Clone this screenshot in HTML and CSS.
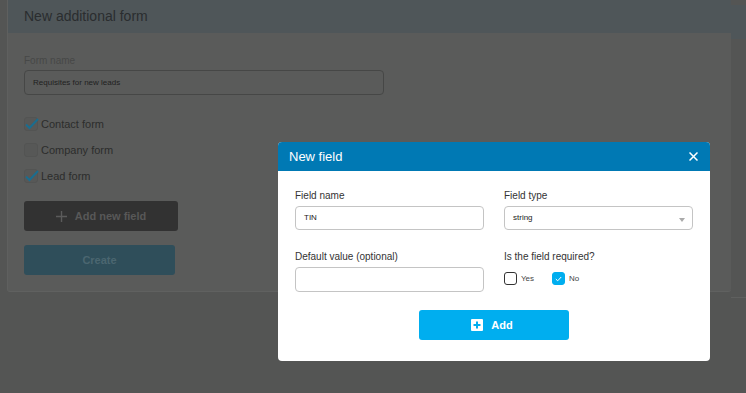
FILE: index.html
```
<!DOCTYPE html>
<html lang="en">
<head>
    <meta charset="UTF-8">
    <meta name="viewport" content="width=device-width, initial-scale=1.0">
    <title>New additional form</title>
    <link rel="stylesheet" href="styles.css">
</head>
<body>
    <div class="page">
        <div class="card">
            <div class="card-head">New additional form</div>
            <div class="card-body">
                <div class="label">Form name</div>
                <div class="input dim">Requisites for new leads</div>
                <div class="checks">
                    <div class="check"><span class="box"><svg width="16" height="14" viewBox="0 0 16 14"><path d="M2 7.5 L5.5 11 L14 2" fill="none" stroke="#1a6d8f" stroke-width="2"/></svg></span>Contact form</div>
                    <div class="check"><span class="box"></span>Company form</div>
                    <div class="check"><span class="box"><svg width="16" height="14" viewBox="0 0 16 14"><path d="M2 7.5 L5.5 11 L14 2" fill="none" stroke="#1a6d8f" stroke-width="2"/></svg></span>Lead form</div>
                </div>
                <button class="btn-dark"><svg width="11" height="11" viewBox="0 0 11 11"><path d="M5.5 0 V11 M0 5.5 H11" stroke="#5b5b5b" stroke-width="1.4"/></svg>Add new field</button>
                <button class="btn-create">Create</button>
            </div>
        </div>
        <div class="side-card"><div class="side-head"></div></div>
    </div>

    <div class="modal">
        <div class="modal-head">
            <span>New field</span>
            <svg class="close" width="9" height="9" viewBox="0 0 9 9"><path d="M0.5 0.5 L8.5 8.5 M8.5 0.5 L0.5 8.5" stroke="#fff" stroke-width="1.5"/></svg>
        </div>
        <div class="modal-body">
            <div class="grid">
                <div class="field">
                    <div class="m-label">Field name</div>
                    <div class="m-input">TIN</div>
                </div>
                <div class="field">
                    <div class="m-label">Field type</div>
                    <div class="m-input select">string<span class="arrow"></span></div>
                </div>
                <div class="field">
                    <div class="m-label">Default value (optional)</div>
                    <div class="m-input tall"></div>
                </div>
                <div class="field">
                    <div class="m-label">Is the field required?</div>
                    <div class="radios">
                        <div class="opt"><span class="m-box"></span>Yes</div>
                        <div class="opt"><span class="m-box on"><svg width="7" height="6" viewBox="0 0 7 6"><path d="M0.8 3 L2.7 4.8 L6.2 1" fill="none" stroke="#fff" stroke-width="1"/></svg></span>No</div>
                    </div>
                </div>
            </div>
            <div class="actions">
                <button class="btn-add"><span class="add-icon"><svg width="8" height="8" viewBox="0 0 8 8"><path d="M4 0.5 V7.5 M0.5 4 H7.5" stroke="#00aeef" stroke-width="2"/></svg></span>Add</button>
            </div>
        </div>
    </div>
</body>
</html>
```

FILE: styles.css
```
body {
    margin: 0;
    background: #545554;
    font-family: 'Liberation Sans', Arial, sans-serif;
    height: 393px;
    overflow: hidden;
}
.page {
    display: flex;
    align-items: flex-start;
    padding-left: 7px;
}
.card {
    width: 724px;
    background: #5a5b5a;
    border-left: 1px solid #5f605f;
    border-bottom: 1px solid #606160;
    border-radius: 0 0 3px 3px;
    box-sizing: border-box;
}
.card-head {
    height: 33px;
    background: #4f5659;
    color: #2a2d2f;
    font-size: 14px;
    line-height: 33px;
    padding-left: 16px;
}
.card-body {
    padding: 22px 17px 16px 16px;
}
.label {
    font-size: 10px;
    line-height: 12px;
    color: #474847;
    margin-bottom: 3px;
}
.input {
    width: 360px;
    height: 25px;
    box-sizing: border-box;
    border: 1px solid #464746;
    border-radius: 4px;
    font-size: 8px;
    line-height: 23px;
    padding-left: 8px;
    color: #1f1f1f;
}
.checks {
    display: flex;
    flex-direction: column;
    gap: 12px;
    margin-top: 22px;
}
.check {
    display: flex;
    align-items: center;
    gap: 3px;
    height: 14px;
    font-size: 11px;
    color: #2c2d2c;
}
.box {
    position: relative;
    width: 14px;
    height: 14px;
    box-sizing: border-box;
    border: 1px solid #535453;
    border-radius: 3px;
    background: #575857;
}
.box svg {
    position: absolute;
    left: -1px;
    top: -1px;
}
button {
    font-family: inherit;
    border: none;
    border-radius: 3px;
    font-weight: bold;
    font-size: 11px;
    cursor: pointer;
    padding: 0;
}
.btn-dark {
    display: flex;
    align-items: center;
    justify-content: center;
    gap: 8px;
    width: 154px;
    height: 30px;
    margin-top: 18px;
    background: #323232;
    color: #585858;
}
.btn-create {
    display: block;
    width: 151px;
    height: 30px;
    margin-top: 14px;
    background: #2f4e5a;
    color: #4b6670;
}
.side-card {
    flex: 1;
    margin-top: 5px;
    height: 293px;
    border-bottom: 1px solid #5f605f;
    box-sizing: border-box;
}
.side-head {
    height: 34px;
    background: #4f5659;
}
.modal {
    position: absolute;
    left: 278px;
    top: 142px;
    width: 432px;
    background: #fff;
    border-radius: 4px;
    overflow: hidden;
}
.modal-head {
    display: flex;
    align-items: center;
    justify-content: space-between;
    height: 29px;
    padding: 0 12px 0 11px;
    background: #0079b4;
    color: #fff;
    font-size: 13px;
}
.modal-body {
    padding: 19px 17px 21px;
}
.grid {
    display: grid;
    grid-template-columns: 189px 189px;
    column-gap: 20px;
    row-gap: 21px;
}
.m-label {
    font-size: 10px;
    line-height: 12px;
    color: #333;
    margin-bottom: 4px;
}
.m-input {
    position: relative;
    height: 24px;
    box-sizing: border-box;
    border: 1px solid #c4c4c4;
    border-radius: 4px;
    font-size: 8px;
    line-height: 22px;
    padding-left: 8px;
    color: #222;
}
.m-input.tall {
    height: 25px;
}
.arrow {
    position: absolute;
    right: 7px;
    top: 11px;
    border-left: 3px solid transparent;
    border-right: 3px solid transparent;
    border-top: 4px solid #aaa;
}
.radios {
    display: flex;
    gap: 18px;
    margin-top: 9px;
}
.opt {
    display: flex;
    align-items: center;
    gap: 4px;
    font-size: 8px;
    color: #444;
}
.m-box {
    display: flex;
    align-items: center;
    justify-content: center;
    width: 13px;
    height: 13px;
    box-sizing: border-box;
    border: 1px solid #333;
    border-radius: 3px;
}
.m-box.on {
    background: #00aeef;
    border-color: #00aeef;
}
.actions {
    display: flex;
    justify-content: center;
    margin-top: 18px;
}
.btn-add {
    display: flex;
    align-items: center;
    justify-content: center;
    gap: 8px;
    width: 150px;
    height: 30px;
    background: #00aeef;
    color: #fff;
    padding-right: 4px;
}
.add-icon {
    display: flex;
    align-items: center;
    justify-content: center;
    width: 12px;
    height: 12px;
    background: #fff;
    border-radius: 1px;
}
```
